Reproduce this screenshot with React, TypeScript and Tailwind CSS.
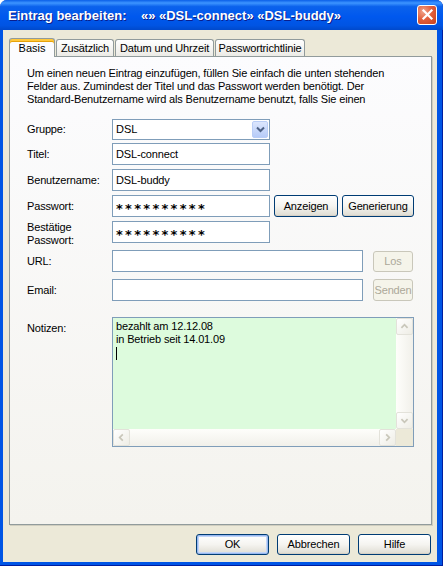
import React from 'react';

const font = "font-['Liberation_Sans',Arial,sans-serif]";

function XpButton({ label, w, h = 'h-[22px]', disabled = false, isDefault = false }: { label: string; w: string; h?: string; disabled?: boolean; isDefault?: boolean }) {
  if (disabled) {
    return (
      <div className={`${w} ${h} flex items-center justify-center rounded-[3px] border border-[#C9C7BA] bg-[#F5F4EA] text-[11px] tracking-[-0.15px] text-[#ACA899]`}>
        {label}
      </div>
    );
  }
  return (
    <div
      className={`${w} ${h} flex items-center justify-center rounded-[3px] border border-[#003C74] text-[11px] tracking-[-0.15px] text-black bg-gradient-to-b from-[#FFFFFF] via-[#F5F4F0] to-[#DEDCD2] ${
        isDefault ? 'shadow-[inset_0_0_0_1px_#98B8F0,inset_0_0_0_2px_#C2D5F7]' : 'shadow-[inset_0_-1px_0_#D6D0C5]'
      }`}
    >
      {label}
    </div>
  );
}

function TextBox({ w, value, stars = false }: { w: string; value?: string; stars?: boolean }) {
  return (
    <div className={`${w} h-[22px] border border-[#7F9DB9] bg-white flex items-center pl-[3px]`}>
      {stars ? (
        <span className="font-['DejaVu_Sans',sans-serif] font-bold text-[13px] tracking-[2.3px] leading-none pt-[4px]">**********</span>
      ) : (
        <span className="text-[11px] tracking-[-0.15px] text-black">{value}</span>
      )}
    </div>
  );
}

function Row({ label, children, mt }: { label: React.ReactNode; children: React.ReactNode; mt: string }) {
  return (
    <div className={`flex items-center h-[22px] ${mt}`}>
      <div className="w-[85px] h-[22px] flex items-center text-[11px] tracking-[-0.15px] leading-[13px] text-black">{label}</div>
      {children}
    </div>
  );
}

function ScrollArrow({ dir }: { dir: 'up' | 'down' | 'left' | 'right' }) {
  const paths: Record<string, string> = {
    up: 'M5 10 L8.5 6.5 L12 10',
    down: 'M5 7 L8.5 10.5 L12 7',
    left: 'M10 5 L6.5 8.5 L10 12',
    right: 'M7 5 L10.5 8.5 L7 12',
  };
  return (
    <div className="w-[17px] h-[17px] rounded-[2px] border border-[#E3E2DA] bg-gradient-to-br from-white to-[#EEEDE5] flex items-center justify-center">
      <svg width="17" height="17" viewBox="0 0 17 17">
        <path d={paths[dir]} fill="none" stroke="#C9C7BA" strokeWidth="2" />
      </svg>
    </div>
  );
}

export default function App() {
  const tabs = [
    { label: 'Zusätzlich', w: 'w-[58px]' },
    { label: 'Datum und Uhrzeit', w: 'w-[99px]' },
    { label: 'Passwortrichtlinie', w: 'w-[90px]' },
  ];

  return (
    <div className={`w-[443px] h-[566px] bg-white ${font}`}>
      <div className="w-[443px] h-[566px] flex flex-col rounded-t-[7px] bg-[#0055E5] overflow-hidden shadow-[inset_-1px_0_0_#001EA0,inset_0_-1px_0_#001EA0]">
        {/* title bar */}
        <div className="h-[30px] shrink-0 flex items-center justify-between pl-[8px] pr-[6px] bg-[linear-gradient(to_bottom,#0A5FE8_0%,#3D95FF_10%,#0B62EC_22%,#0058EE_55%,#0054E3_85%,#0049CB_100%)]">
          <span className="text-white font-bold text-[13px] whitespace-pre [text-shadow:1px_1px_0_#0A1E8C] pt-[1px]">
            {'Eintrag bearbeiten:    «» «DSL-connect» «DSL-buddy»'}
          </span>
          <div className="w-[20px] h-[20px] rounded-[3px] border border-white bg-[radial-gradient(circle_at_30%_30%,#F0A58C_0%,#E2603D_45%,#C9401C_100%)] flex items-center justify-center -mt-[1px]">
            <svg width="13" height="13" viewBox="0 0 13 13">
              <path d="M2.5 2.5 L10.5 10.5 M10.5 2.5 L2.5 10.5" stroke="white" strokeWidth="2.2" strokeLinecap="square" />
            </svg>
          </div>
        </div>

        {/* body */}
        <div className="flex-1 ml-[3px] mr-[6px] mb-[4px] bg-[#ECE9D8] flex flex-col px-[6px] pt-[7px]">
          {/* tabs */}
          <div className="flex items-end h-[19px]">
            <div className="w-[46px] h-[19px] relative z-10 -mb-px border border-b-0 border-[#919B9C] rounded-t-[3px] bg-[#FCFCFE] flex items-center justify-center text-[11px] shadow-[inset_0_2px_0_#FFC83C,inset_0_3px_0_#E6A20A]">
              <span className="pt-[1px]">Basis</span>
            </div>
            {tabs.map((t) => (
              <div
                key={t.label}
                className={`${t.w} h-[17px] ml-px border border-b-0 border-[#919B9C] rounded-t-[3px] bg-gradient-to-b from-white to-[#ECEBE6] flex items-center justify-center text-[11px] tracking-[-0.15px] text-black`}
              >
                {t.label}
              </div>
            ))}
          </div>

          {/* panel */}
          <div className="h-[469px] w-[423px] border border-[#919B9C] bg-gradient-to-b from-[#FCFCFE] to-[#F4F3EE] shadow-[1px_1px_0_#D0CEBF] pl-[17px] pt-[10px] text-black">
            <div className="text-[11px] tracking-[-0.15px] leading-[13px] whitespace-nowrap">
              <div>Um einen neuen Eintrag einzufügen, füllen Sie einfach die unten stehenden</div>
              <div>Felder aus. Zumindest der Titel und das Passwort werden benötigt. Der</div>
              <div>Standard-Benutzername wird als Benutzername benutzt, falls Sie einen</div>
            </div>

            <Row label="Gruppe:" mt="mt-[12px]">
              <div className="w-[158px] h-[21px] border border-[#7F9DB9] bg-white flex items-center justify-between pl-[3px] pr-px">
                <span className="text-[11px]">DSL</span>
                <div className="w-[16px] h-[17px] rounded-[2px] border border-[#B9CDF6] bg-gradient-to-b from-[#DCE6FD] to-[#B6CBF8] flex items-center justify-center">
                  <svg width="9" height="7" viewBox="0 0 9 7">
                    <path d="M1 1.5 L4.5 5 L8 1.5" fill="none" stroke="#4D6185" strokeWidth="2" />
                  </svg>
                </div>
              </div>
            </Row>

            <Row label="Titel:" mt="mt-[3px]">
              <TextBox w="w-[158px]" value="DSL-connect" />
            </Row>

            <Row label="Benutzername:" mt="mt-[4px]">
              <TextBox w="w-[158px]" value="DSL-buddy" />
            </Row>

            <Row label="Passwort:" mt="mt-[4px]">
              <TextBox w="w-[158px]" stars />
              <div className="ml-[4px] flex gap-[4px]">
                <XpButton label="Anzeigen" w="w-[64px]" />
                <XpButton label="Generierung" w="w-[72px]" />
              </div>
            </Row>

            <Row
              label={
                <div className="pt-[4px]">
                  Bestätige
                  <br />
                  Passwort:
                </div>
              }
              mt="mt-[4px]"
            >
              <TextBox w="w-[158px]" stars />
            </Row>

            <Row label="URL:" mt="mt-[7px]">
              <TextBox w="w-[251px]" />
              <div className="ml-[10px]">
                <XpButton label="Los" w="w-[40px]" h="h-[21px]" disabled />
              </div>
            </Row>

            <Row label="Email:" mt="mt-[7px]">
              <TextBox w="w-[251px]" />
              <div className="ml-[10px]">
                <XpButton label="Senden" w="w-[40px]" h="h-[22px]" disabled />
              </div>
            </Row>

            <div className="flex mt-[16px]">
              <div className="w-[85px] text-[11px] tracking-[-0.15px] pt-[3px]">Notizen:</div>
              <div className="w-[302px] h-[130px] border border-[#7F9DB9] bg-[#DDFBDD] flex flex-col">
                <div className="flex flex-1 min-h-0">
                  <div className="flex-1 pl-[3px] pt-[2px] text-[11px] tracking-[-0.15px] leading-[13px]">
                    <div>bezahlt am 12.12.08</div>
                    <div>in Betrieb seit 14.01.09</div>
                    <div className="w-px h-[13px] bg-black mt-px" />
                  </div>
                  <div className="w-[17px] flex flex-col justify-between bg-gradient-to-r from-[#FEFEFB] to-[#F1F0EA]">
                    <ScrollArrow dir="up" />
                    <ScrollArrow dir="down" />
                  </div>
                </div>
                <div className="h-[17px] flex bg-gradient-to-b from-[#FEFEFB] to-[#F1F0EA]">
                  <div className="flex-1 flex justify-between">
                    <ScrollArrow dir="left" />
                    <ScrollArrow dir="right" />
                  </div>
                  <div className="w-[17px] bg-[#ECE9D8]" />
                </div>
              </div>
            </div>
          </div>

          {/* dialog buttons */}
          <div className="flex justify-end gap-[8px] mt-[9px]">
            <XpButton label="OK" w="w-[73px]" h="h-[21px]" isDefault />
            <XpButton label="Abbrechen" w="w-[73px]" h="h-[21px]" />
            <XpButton label="Hilfe" w="w-[73px]" h="h-[21px]" />
          </div>
        </div>
      </div>
    </div>
  );
}
